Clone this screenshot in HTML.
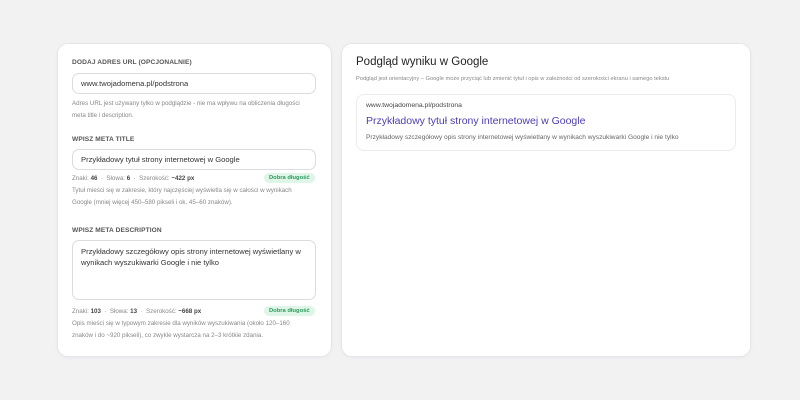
<!DOCTYPE html>
<html><head><meta charset="utf-8"><style>
*{box-sizing:border-box;margin:0;padding:0}
body{width:800px;height:400px;background:#f2f2f3;font-family:"Liberation Sans",sans-serif;position:relative;overflow:hidden;color:#333}
.card{position:absolute;background:#fff;border:1px solid #e6e6e8;border-radius:11px;box-shadow:0 1px 3px rgba(0,0,0,.04)}
.abs{position:absolute;white-space:nowrap}
.lbl{font-size:6.6px;font-weight:bold;color:#555;letter-spacing:.1px}
.inp{position:absolute;border:1px solid #dcdce0;border-radius:7px;background:#fff;font-size:7.6px;color:#333;padding-left:8px}
.help{font-size:6.2px;color:#888;line-height:11.5px;white-space:normal}
.stats{font-size:6.2px;color:#888}
.stats b{color:#444;font-weight:bold}
.badge{position:absolute;background:#dff5e8;color:#2c9a5c;font-size:5.8px;font-weight:bold;border-radius:6px;padding:2px 5px}
</style></head><body>
<div class="card" style="left:57px;top:43px;width:275px;height:314px"></div>
<div class="abs lbl" style="left:72px;top:59px">DODAJ ADRES URL (OPCJONALNIE)</div>
<div class="inp" style="left:72px;top:73px;width:244px;height:21px;line-height:19px">www.twojadomena.pl/podstrona</div>
<div class="abs help" style="left:72px;top:98px;width:235px">Adres URL jest używany tylko w podglądzie - nie ma wpływu na obliczenia długości meta title i description.</div>
<div class="abs lbl" style="left:72px;top:136px">WPISZ META TITLE</div>
<div class="inp" style="left:72px;top:149px;width:244px;height:21px;line-height:19px">Przykładowy tytuł strony internetowej w Google</div>
<div class="abs stats" style="left:72px;top:175px">Znaki: <b>46</b> &nbsp;·&nbsp; Słowa: <b>6</b> &nbsp;·&nbsp; Szerokość: <b>~422 px</b></div>
<div class="badge" style="left:264px;top:173px">Dobra długość</div>
<div class="abs help" style="left:72px;top:185px;width:232px">Tytuł mieści się w zakresie, który najczęściej wyświetla się w całości w wynikach Google (mniej więcej 450–580 pikseli i ok. 45–60 znaków).</div>
<div class="abs lbl" style="left:72px;top:227px">WPISZ META DESCRIPTION</div>
<div class="inp" style="left:72px;top:240px;width:244px;height:60px;padding-top:5px;line-height:11px;white-space:normal;padding-right:8px">Przykładowy szczegółowy opis strony internetowej wyświetlany w wynikach wyszukiwarki Google i nie tylko</div>
<div class="abs stats" style="left:72px;top:308px">Znaki: <b>103</b> &nbsp;·&nbsp; Słowa: <b>13</b> &nbsp;·&nbsp; Szerokość: <b>~668 px</b></div>
<div class="badge" style="left:264px;top:306px">Dobra długość</div>
<div class="abs help" style="left:72px;top:318px;width:236px">Opis mieści się w typowym zakresie dla wyników wyszukiwania (około 120–160 znaków i do ~920 pikseli), co zwykle wystarcza na 2–3 krótkie zdania.</div>

<div class="card" style="left:341px;top:43px;width:410px;height:314px"></div>
<div class="abs" style="left:356px;top:56px;font-size:11.5px;color:#222">Podgląd wyniku w Google</div>
<div class="abs" style="left:356px;top:76px;font-size:5.7px;color:#888">Podgląd jest orientacyjny – Google może przyciąć lub zmienić tytuł i opis w zależności od szerokości ekranu i samego tekstu</div>
<div class="abs" style="left:356px;top:94px;width:380px;height:57px;border:1px solid #ececee;border-radius:8px"></div>
<div class="abs" style="left:366px;top:102px;font-size:6.8px;color:#444">www.twojadomena.pl/podstrona</div>
<div class="abs" style="left:366px;top:115px;font-size:10.5px;color:#4b3fae">Przykładowy tytuł strony internetowej w Google</div>
<div class="abs" style="left:366px;top:134px;font-size:6.6px;color:#666">Przykładowy szczegółowy opis strony internetowej wyświetlany w wynikach wyszukiwarki Google i nie tylko</div>
</body></html>
